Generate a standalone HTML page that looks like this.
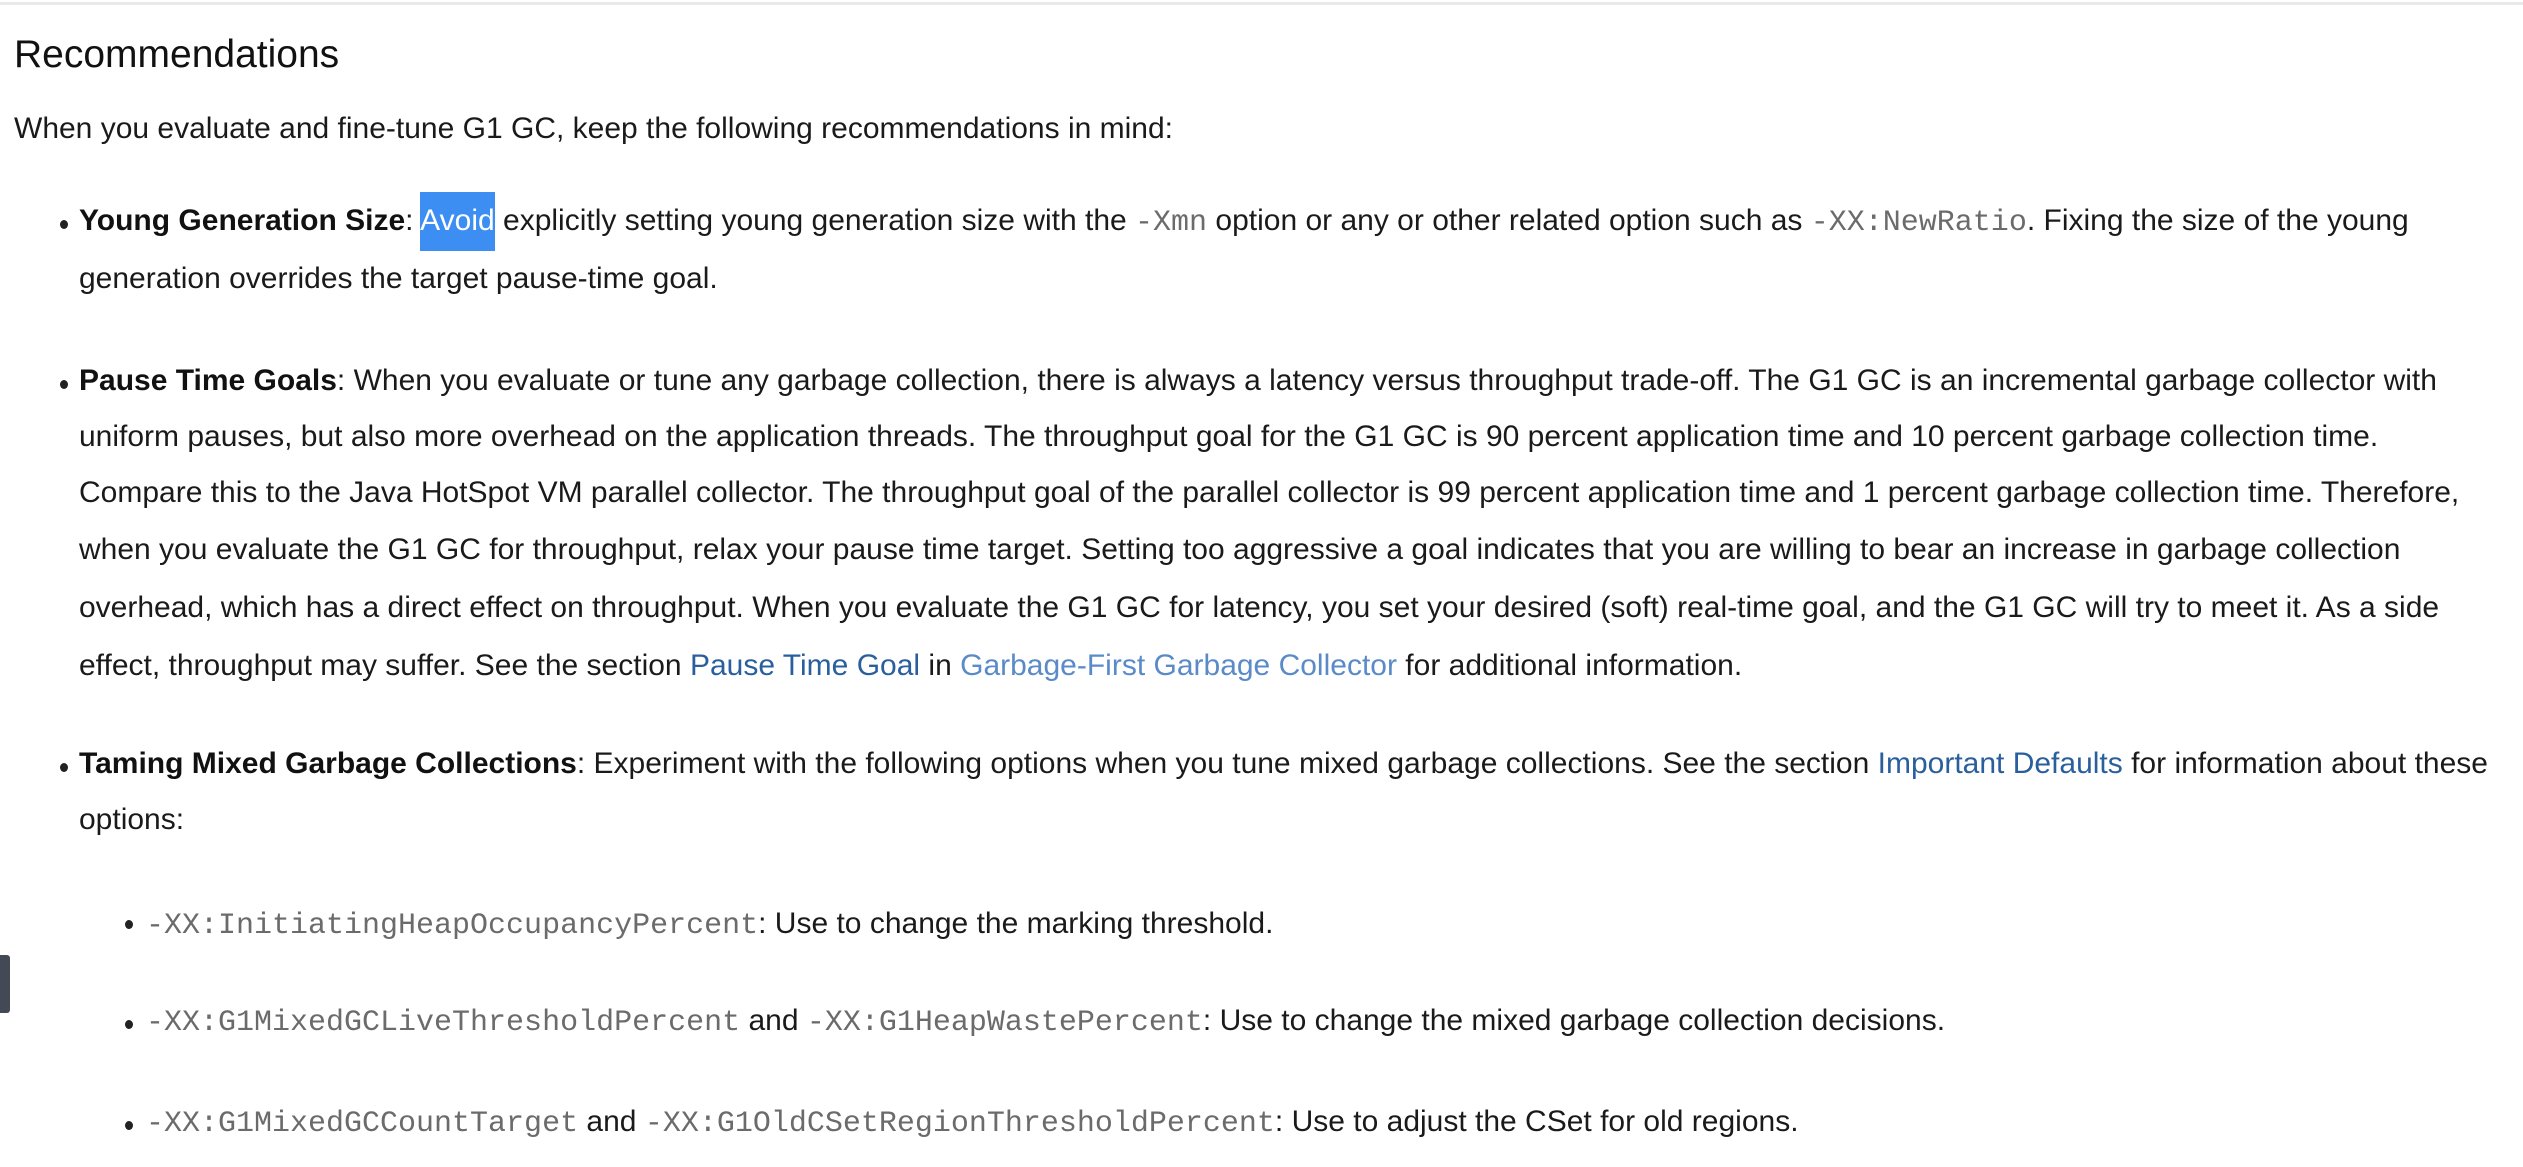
<!DOCTYPE html>
<html><head><meta charset="utf-8"><style>
html,body{margin:0;padding:0;background:#fff;width:2523px;height:1167px;overflow:hidden}
body{font-family:"Liberation Sans",Arial,sans-serif;color:#1a1a1a;position:relative}
.l{position:absolute;white-space:nowrap;font-size:30px;line-height:30px}
.m{font-family:"Liberation Mono",monospace;color:#6b6b6b;font-size:30px}
b{font-weight:bold;color:#111}
.a1{color:#2a5f9e}.a2{color:#5a8bc8}
.dot{position:absolute;width:8px;height:9px;border-radius:50%;background:#222}
.hl{background:#3d8ef2;color:#fff;padding:12px 0 14px}
</style></head><body>
<div style="position:absolute;left:0;top:2px;width:2523px;height:3px;background:#e9e9e9"></div>
<div class="l" style="left:14px;top:35px;font-size:39px;line-height:39px;color:#111">Recommendations</div>
<div class="l" style="left:14px;top:114px">When you evaluate and fine-tune G1 GC, keep the following recommendations in mind:</div>

<div class="dot" style="left:60px;top:220px"></div>
<div class="l" style="left:79px;top:206px"><b>Young Generation Size</b>: <span class="hl">Avoid</span> explicitly setting young generation size with the <span class="m">-Xmn</span> option or any or other related option such as <span class="m">-XX:NewRatio</span>. Fixing the size of the young</div>
<div class="l" style="left:79px;top:264px">generation overrides the target pause-time goal.</div>

<div class="dot" style="left:60px;top:380px"></div>
<div class="l" style="left:79px;top:366px"><b>Pause Time Goals</b>: When you evaluate or tune any garbage collection, there is always a latency versus throughput trade-off. The G1 GC is an incremental garbage collector with</div>
<div class="l" style="left:79px;top:422px">uniform pauses, but also more overhead on the application threads. The throughput goal for the G1 GC is 90 percent application time and 10 percent garbage collection time.</div>
<div class="l" style="left:79px;top:478px">Compare this to the Java HotSpot VM parallel collector. The throughput goal of the parallel collector is 99 percent application time and 1 percent garbage collection time. Therefore,</div>
<div class="l" style="left:79px;top:535px">when you evaluate the G1 GC for throughput, relax your pause time target. Setting too aggressive a goal indicates that you are willing to bear an increase in garbage collection</div>
<div class="l" style="left:79px;top:593px">overhead, which has a direct effect on throughput. When you evaluate the G1 GC for latency, you set your desired (soft) real-time goal, and the G1 GC will try to meet it. As a side</div>
<div class="l" style="left:79px;top:651px">effect, throughput may suffer. See the section <span class="a1">Pause Time Goal</span> in <span class="a2">Garbage-First Garbage Collector</span> for additional information.</div>

<div class="dot" style="left:60px;top:763px"></div>
<div class="l" style="left:79px;top:749px"><b>Taming Mixed Garbage Collections</b>: Experiment with the following options when you tune mixed garbage collections. See the section <span class="a1">Important Defaults</span> for information about these</div>
<div class="l" style="left:79px;top:805px">options:</div>

<div class="dot" style="left:125px;top:920px"></div>
<div class="l" style="left:146px;top:909px"><span class="m">-XX:InitiatingHeapOccupancyPercent</span>: Use to change the marking threshold.</div>
<div class="dot" style="left:125px;top:1020px"></div>
<div class="l" style="left:146px;top:1006px"><span class="m">-XX:G1MixedGCLiveThresholdPercent</span> and <span class="m">-XX:G1HeapWastePercent</span>: Use to change the mixed garbage collection decisions.</div>
<div class="dot" style="left:125px;top:1121px"></div>
<div class="l" style="left:146px;top:1107px"><span class="m">-XX:G1MixedGCCountTarget</span> and <span class="m">-XX:G1OldCSetRegionThresholdPercent</span>: Use to adjust the CSet for old regions.</div>

<div style="position:absolute;left:0;top:955px;width:10px;height:58px;background:#444a55;border-radius:0 3px 3px 0"></div>
</body></html>
